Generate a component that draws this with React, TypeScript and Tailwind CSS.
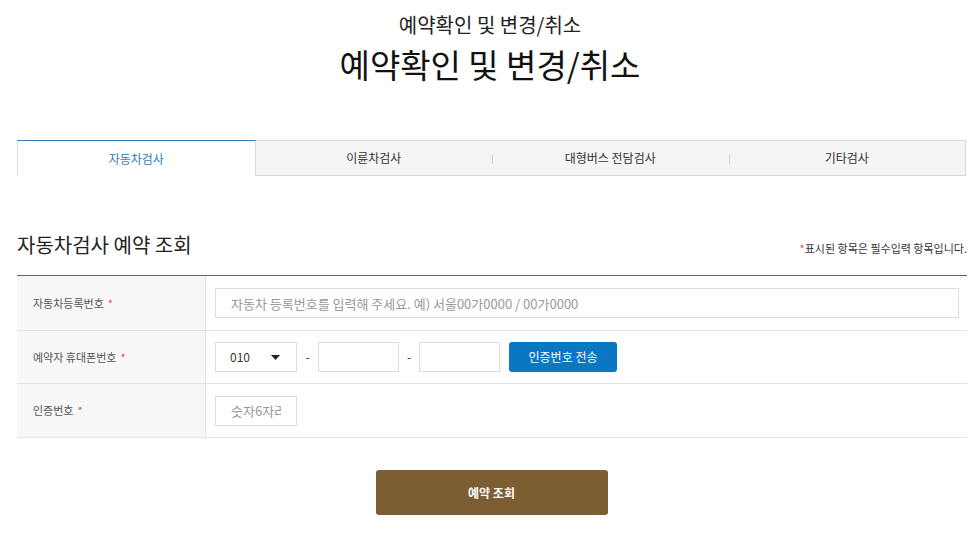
import React, { useState } from "react";

const tabs = ["자동차검사", "이륜차검사", "대형버스 전담검사", "기타검사"];

function Req() {
  return <span className="text-[#d9534f] ml-1">*</span>;
}

export default function App() {
  const [active, setActive] = useState(0);

  return (
    <div
      className="w-[980px] h-[542px] bg-white text-[#222] overflow-hidden"
      style={{ fontFamily: '"Noto Sans CJK KR", "Noto Sans", sans-serif' }}
    >
      {/* Title */}
      <div className="flex flex-col items-center pt-[10px]">
        <p className="text-[20px] leading-[30px] text-[#222]">예약확인 및 변경/취소</p>
        <h1 className="text-[33px] leading-[46px] text-[#111] mt-[1px]">예약확인 및 변경/취소</h1>
      </div>

      {/* Tabs */}
      <div className="mx-[17px] mt-[53px] w-[949px] flex h-[36px] border-b border-[#d9d9d9]">
        {tabs.map((t, i) => {
          const on = i === active;
          return (
            <button
              key={t}
              onClick={() => setActive(i)}
              className={
                on
                  ? "flex-1 relative flex items-center justify-center text-[12px] text-[#2a7db5] bg-white border-t border-t-[#2a7db5] border-l border-l-[#d9d9d9] border-r border-r-[#d9d9d9] -mb-px"
                  : "flex-1 relative flex items-center justify-center text-[12px] text-[#333] bg-[#f5f5f5] border-t border-t-[#d9d9d9] last:border-r last:border-r-[#d9d9d9]"
              }
            >
              {!on && i > 1 && (
                <span className="absolute left-0 top-[14px] h-[9px] w-px bg-[#d0d0d0]" />
              )}
              {t}
            </button>
          );
        })}
      </div>

      {/* Section heading */}
      <div className="mx-[17px] w-[950px] mt-[55px] flex items-end justify-between">
        <h2 className="text-[20px] leading-[28px] text-[#222]">자동차검사 예약 조회</h2>
        <p className="text-[11px] text-[#333] mb-[3px] whitespace-nowrap">
          <span className="text-[#d9534f]">*</span>표시된 항목은 필수입력 항목입니다.
        </p>
      </div>

      {/* Form table */}
      <div className="mx-[17px] w-[950px] mt-[16px] border-t border-t-[#666]">
        <div className="flex h-[55px] border-b border-[#e3e3e3]">
          <div className="w-[189px] bg-[#f7f7f7] border-r border-[#e3e3e3] flex items-center pl-[16px] text-[11px] text-[#555]">
            자동차등록번호
            <Req />
          </div>
          <div className="flex-1 flex items-center pl-[9px] pr-[8px]">
            <input
              className="w-full h-[30px] border border-[#dddddd] px-[15px] text-[13px] outline-none placeholder:text-[#999]"
              placeholder="자동차 등록번호를 입력해 주세요. 예) 서울00가0000 / 00가0000"
            />
          </div>
        </div>

        <div className="flex h-[53px] border-b border-[#e3e3e3]">
          <div className="w-[189px] bg-[#f7f7f7] border-r border-[#e3e3e3] flex items-center pl-[16px] text-[11px] text-[#555]">
            예약자 휴대폰번호
            <Req />
          </div>
          <div className="flex-1 flex items-center pl-[9px] text-[12px] text-[#333]">
            <div className="w-[82px] h-[30px] border border-[#dddddd] flex items-center pl-[14px] pr-[16px] justify-between">
              <span className="text-[12px]">010</span>
              <svg width="9" height="5" viewBox="0 0 9 5">
                <path d="M0 0 L9 0 L4.5 5 Z" fill="#222" />
              </svg>
            </div>
            <span className="w-[21px] text-center">-</span>
            <input className="w-[81px] h-[30px] border border-[#dddddd] outline-none" />
            <span className="w-[20px] text-center">-</span>
            <input className="w-[81px] h-[30px] border border-[#dddddd] outline-none" />
            <button className="ml-[9px] w-[108px] h-[30px] rounded-[3px] bg-[#0a77c2] text-white text-[12px]">
              인증번호 전송
            </button>
          </div>
        </div>

        <div className="flex h-[54px] border-b border-[#e3e3e3]">
          <div className="w-[189px] bg-[#f7f7f7] border-r border-[#e3e3e3] flex items-center pl-[16px] text-[11px] text-[#555]">
            인증번호
            <Req />
          </div>
          <div className="flex-1 flex items-center pl-[9px]">
            <input
              className="w-[82px] h-[30px] border border-[#dddddd] px-[15px] text-[13px] outline-none placeholder:text-[#999]"
              placeholder="숫자6자리"
            />
          </div>
        </div>
      </div>

      {/* Submit */}
      <div className="flex justify-center mt-[32px] pl-[3px]">
        <button className="w-[232px] h-[45px] rounded-[3px] bg-[#7d5e33] text-white text-[12px] font-bold">
          예약 조회
        </button>
      </div>
    </div>
  );
}
